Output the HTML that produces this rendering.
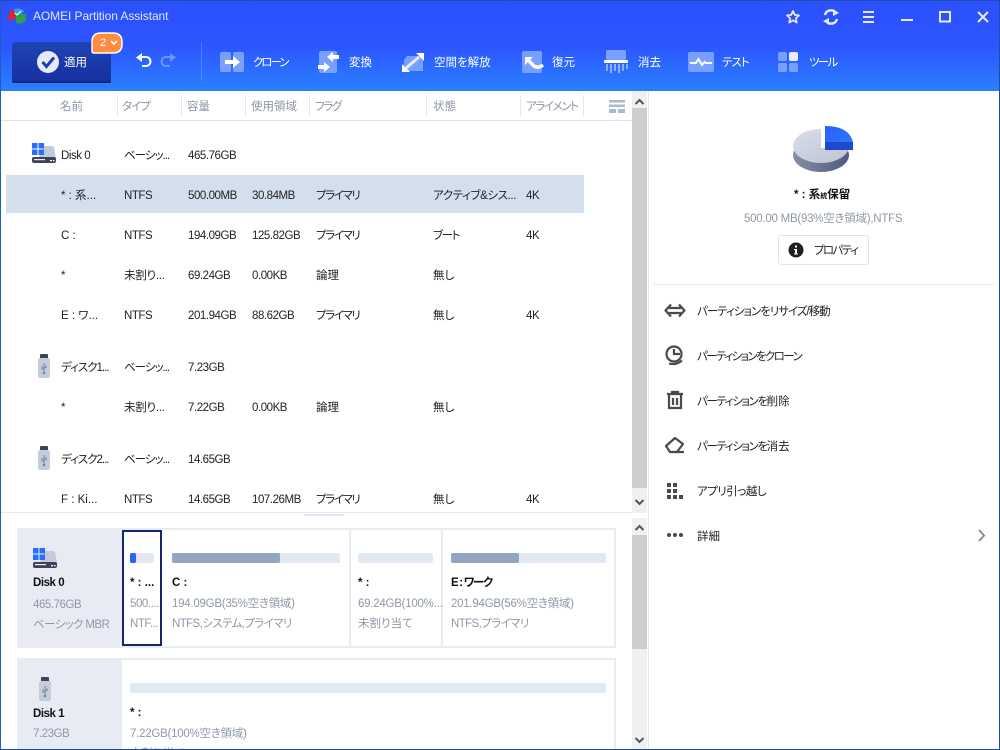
<!DOCTYPE html>
<html lang="ja"><head><meta charset="utf-8"><title>AOMEI Partition Assistant</title>
<style>
html,body{margin:0;padding:0;width:1000px;height:750px;overflow:hidden;background:#fff}
body{position:relative;font-family:"Liberation Sans","Noto Sans CJK JP",sans-serif;font-size:11.5px;color:#222;font-feature-settings:"palt"}
.b{position:absolute}
.t{position:absolute;white-space:nowrap;line-height:16px;height:16px;margin-top:1px}
.h{color:#8b95a7;font-size:11.5px}
.w{color:#fff;font-size:11.5px}
.g{color:#8f98a8;font-size:11.5px}
.s{font-weight:bold;color:#111}
.n{letter-spacing:-.45px}
.m{letter-spacing:-.25px}
.k{letter-spacing:-1.4px}
.j{letter-spacing:-1px}
.i{letter-spacing:-.6px}
svg{position:absolute;left:0;top:0}
</style></head><body>
<div class="b" style="left:0;top:0;width:1000px;height:91px;background:linear-gradient(#2b50ff 0,#2d55ff 50%,#2a80ff 100%)"></div>
<div class="b" style="left:6px;top:175px;width:578px;height:38px;background:#d4dfee"></div>
<div class="b" style="left:0;top:120px;width:632px;height:1px;background:#dbe2ee"></div>
<div class="b" style="left:0;top:512px;width:632px;height:1px;background:#e3e8f2"></div>
<div class="b" style="left:304px;top:514px;width:40px;height:2px;background:#e3e8f2"></div>
<div class="b" style="left:632px;top:91px;width:15px;height:422px;background:#f0f0f0"></div>
<div class="b" style="left:632px;top:108px;width:15px;height:380px;background:#cdcdcd"></div>
<div class="b" style="left:632px;top:518px;width:15px;height:231px;background:#f0f0f0"></div>
<div class="b" style="left:632px;top:535px;width:15px;height:114px;background:#cdcdcd"></div>
<div class="b" style="left:648px;top:91px;width:1px;height:658px;background:#e0e6f0"></div>
<div class="b" style="left:653px;top:284px;width:341px;height:1px;background:#e3e8f2"></div>
<div class="b" style="left:778px;top:235px;width:89px;height:28px;border:1px solid #dfe4ee;border-radius:3px"></div>

<div class="b" style="left:17px;top:528px;width:595px;height:116px;border:2px solid #e8ecf3"></div>
<div class="b" style="left:17px;top:528px;width:105px;height:120px;background:#e8ebf3"></div>
<div class="b" style="left:349px;top:530px;width:2px;height:116px;background:#e8ecf3"></div>
<div class="b" style="left:441px;top:530px;width:2px;height:116px;background:#e8ecf3"></div>
<div class="b" style="left:122px;top:530px;width:36px;height:112px;border:2px solid #14266e"></div>
<div class="b" style="left:17px;top:658px;width:595px;height:100px;border:2px solid #e8ecf3"></div>
<div class="b" style="left:17px;top:658px;width:105px;height:100px;background:#e8ebf3"></div>

<div class="b" style="left:130px;top:553px;width:24px;height:10px;background:#e3e9f3;border-radius:2px"></div>
<div class="b" style="left:130px;top:553px;width:6px;height:10px;background:#2a62f5;border-radius:2px"></div>
<div class="b" style="left:172px;top:553px;width:168px;height:10px;background:#e3e9f3;border-radius:2px"></div>
<div class="b" style="left:172px;top:553px;width:108px;height:10px;background:#92a6c4;border-radius:2px"></div>
<div class="b" style="left:358px;top:553px;width:75px;height:10px;background:#e3e9f3;border-radius:2px"></div>
<div class="b" style="left:451px;top:553px;width:155px;height:10px;background:#e3e9f3;border-radius:2px"></div>
<div class="b" style="left:451px;top:553px;width:68px;height:10px;background:#92a6c4;border-radius:2px"></div>
<div class="b" style="left:130px;top:683px;width:476px;height:10px;background:#e3e9f3;border-radius:2px"></div>

<div class="b" style="left:0;top:0;width:1000px;height:1px;background:#1c4fa0"></div>
<div class="b" style="left:0;top:0;width:1px;height:750px;background:#1a5fc0"></div>
<div class="b" style="left:999px;top:0;width:1px;height:750px;background:#1c4fa0"></div>

<svg width="1000" height="750" viewBox="0 0 1000 750">
<defs>
<linearGradient id="ap" x1="0" y1="0" x2="0" y2="1"><stop offset="0" stop-color="#1d44b4"/><stop offset="1" stop-color="#1730a0"/></linearGradient>
<linearGradient id="pie" x1="0" y1="0" x2="1" y2="1"><stop offset="0" stop-color="#d9dde8"/><stop offset="1" stop-color="#bcc4d6"/></linearGradient>
<linearGradient id="pies" x1="0" y1="0" x2="1" y2="0"><stop offset="0" stop-color="#868ea8"/><stop offset="1" stop-color="#4f5a7c"/></linearGradient>
<linearGradient id="bl" x1="0" y1="0" x2="1" y2="1"><stop offset="0" stop-color="#2a5cff"/><stop offset="1" stop-color="#2a80ff"/></linearGradient>
<g id="usb"><rect x="2" y="0" width="8" height="5" rx="1" fill="#3d4458"/><rect x="0" y="4" width="12" height="20" rx="2" fill="#c5cddd"/><path d="M6 9v10M4 12v3h2M8 11v2.500H6" stroke="#78839b" stroke-width="1" fill="none"/><circle cx="6" cy="19" r="1.300" fill="#78839b"/></g>
<g id="dk"><path d="M12 3 H20 Q22 3 22.500 6 L24 16 H6Z" fill="#c3cadb"/><rect x="0" y="14" width="24" height="6" rx="2" fill="#3d4458"/><rect x="2" y="16" width="11" height="1.200" fill="#e8ebf3"/><rect x="18" y="17" width="2" height="1.300" fill="#fff"/><rect x="21" y="17" width="1.500" height="1.300" fill="#fff"/><path d="M0 0h5.500v5.500H0zM6.500 0H12v5.500H6.500zM0 6.500h5.500V12H0zM6.500 6.500H12V12H6.500z" fill="#2a6cff"/></g>
</defs>
<!-- app icon -->
<path d="M8 19 Q8 10 16 9 L19 9 V15 L13 20 H9Z" fill="#d8282d"/><path d="M14 9 Q20 7 24 11 L21 15 H15Z" fill="#2f9be0"/><path d="M16 14 H26 V21 Q21 25 16 23Z" fill="#2aa14c"/><path d="M15 13l2 2 4-4" stroke="#fff" stroke-width="1" fill="none"/>
<!-- top right -->
<path d="M793 11 l1.800 3.900 4.200.5-3.100 2.900.8 4.200-3.700-2.100-3.700 2.100.8-4.200-3.100-2.900 4.200-.5z" fill="none" stroke="#e6ebff" stroke-width="1.800" stroke-linejoin="round"/>
<path d="M825 15a6 6 0 0 1 10-3M837 19a6 6 0 0 1-10 3" fill="none" stroke="#e6ebff" stroke-width="2.400"/><path d="M833 9l6 4-6 3zM829 25l-6-4 6-3z" fill="#e6ebff"/>
<path d="M863 12h11M863 17h11M863 22h11" stroke="#e6ebff" stroke-width="2"/>
<path d="M901 20h12" stroke="#e6ebff" stroke-width="2"/>
<rect x="940" y="12" width="10" height="9.500" fill="none" stroke="#e6ebff" stroke-width="2"/>
<path d="M978 12l10 10M988 12l-10 10" stroke="#e6ebff" stroke-width="2"/>
<!-- apply -->
<rect x="12" y="42" width="99" height="41" rx="3" fill="url(#ap)"/>
<rect x="12" y="81" width="99" height="2" rx="1" fill="#142680"/>
<circle cx="48" cy="62" r="11" fill="#e6eaf6"/><path d="M42.500 62l4 4.500 7.500-9" fill="none" stroke="#1f3fb0" stroke-width="3"/>
<path d="M94 53 H113 Q122 53 122 44 V42 Q122 33 113 33 H101 Q92 33 92 42 V51 Q92 53 94 53Z" fill="#ff8c3f" stroke="#fff" stroke-width="1.500"/>
<path d="M111 41l3 3 3-3" fill="none" stroke="#fff" stroke-width="1.800"/>
<!-- undo redo -->
<path d="M141 57h5a4.500 4.500 0 0 1 0 9h-4" fill="none" stroke="#fff" stroke-width="2"/><path d="M142 53l-6 4.500 6 4.500z" fill="#fff"/>
<path d="M171 57h-5a4.500 4.500 0 0 0 0 9h4" fill="none" stroke="#6c95ff" stroke-width="2"/><path d="M170 53l6 4.500-6 4.500z" fill="#6c95ff"/>
<rect x="201" y="42" width="1" height="39" fill="#fff" opacity=".18"/>
<!-- clone -->
<rect x="220" y="52" width="11" height="20" rx="2" fill="#7aa0ff"/><rect x="233" y="52" width="11" height="20" rx="2" fill="#7aa0ff"/>
<path d="M225 60h8v-4l7 6-7 6v-4h-8z" fill="#fff"/>
<!-- convert -->
<rect x="319" y="51" width="18" height="22" rx="2" fill="#7aa0ff"/>
<path d="M339 55v4h-6v3l-6-5 6-5v3z" fill="#fff"/><path d="M318 65h6v-3l6 5-6 5v-3h-6z" fill="#fff"/>
<!-- free -->
<path d="M407 56h16v15h-19v-11z" fill="#7aa0ff"/>
<path d="M424 53v8l-8-8z" fill="#fff"/><path d="M402 72v-8l8 8z" fill="#fff"/>
<path d="M412 63l7-6M405 69l7-6" stroke="#e6ecff" stroke-width="3"/>
<!-- restore -->
<rect x="522" y="51" width="20" height="22" rx="2" fill="#7aa0ff"/><path d="M525 57h8l-8 8z" fill="#fff"/><path d="M528 60l6 6q4 3 9-1" fill="none" stroke="#fff" stroke-width="3.500"/>
<!-- wipe -->
<path d="M606 52q0-2 2-2h16q2 0 2 2v8h-20z" fill="#7aa0ff"/><rect x="604" y="60" width="24" height="3" rx="1" fill="#fff"/>
<path d="M607 64v7M611 64v9M615 64v7M619 64v9M623 64v7M627 64v5" stroke="#8cb0ff" stroke-width="2"/>
<!-- test -->
<rect x="688" y="52" width="26" height="20" rx="2" fill="#7aa0ff"/><path d="M690 63h6l2.500-4 3.500 6 2.500-3 1.500 1h6" fill="none" stroke="#fff" stroke-width="2"/>
<!-- tools -->
<rect x="778" y="52" width="9" height="9" rx="2" fill="#7aa0ff"/><rect x="789" y="52" width="9" height="9" rx="2" fill="#e6ecff"/><rect x="778" y="63" width="9" height="9" rx="2" fill="#7aa0ff"/><rect x="789" y="63" width="9" height="9" rx="2" fill="#7aa0ff"/>
<!-- header list icon -->
<path d="M609 100h16v2.500h-16zM609 104.500h16v2.500h-16z" fill="#a9b9d0"/><path d="M609 109h7v4h-7zM618 109h7v4h-7z" fill="#a9b9d0"/>
<!-- scrollbar arrows -->
<g fill="none" stroke="#555" stroke-width="2"><path d="M635.500 104l4-4 4 4M635.500 500l4 4 4-4M635.500 530l4-4 4 4M635.500 738l4 4 4-4"/></g>
<!-- disk icons -->
<use href="#dk" x="32" y="143"/>
<use href="#dk" x="33" y="548"/>
<use href="#usb" x="38" y="354"/><use href="#usb" x="38" y="446"/><use href="#usb" x="39" y="677"/>
<!-- pie -->
<ellipse cx="821" cy="155" rx="28" ry="17" fill="url(#pies)"/>
<ellipse cx="821" cy="146" rx="28" ry="17" fill="url(#pie)"/>
<rect x="821" y="125" width="5" height="23" fill="#fff"/>
<path d="M825 126q24 0 28 16v8h-28z" fill="url(#bl)"/><path d="M825 142h28v8h-28z" fill="#1d49cc"/>
<!-- info -->
<circle cx="796" cy="250" r="7.500" fill="#1f1f1f"/><path d="M794 249h3v4.500h1v1h-4v-1h1v-3.500h-1zM795 245.500h2v2h-2z" fill="#fff"/>
<!-- menu icons -->
<g fill="none" stroke="#4a4a4a" stroke-width="2.200">
<path d="M669 308h12M669 313h12"/><path d="M671 304.500l-5.500 6 5.500 6M679 304.500l5.500 6-5.500 6" stroke-linejoin="round"/>
<circle cx="674" cy="354" r="7.500"/><path d="M674 349v5h6"/><path d="M669 363.500q7 2 13-3"/>
<path d="M667 394h16M672 394v-2h6v2M669 395v13h12v-13M673 398v7M677 398v7"/>
<path d="M666 446l9-8 8 6-6 8h-7z" stroke-linejoin="round"/><path d="M674 452h10"/>
</g>
<g fill="#4a4a4a"><rect x="667" y="483" width="4" height="4"/><rect x="673" y="483" width="4" height="4"/><rect x="667" y="489" width="4" height="4"/><rect x="673" y="489" width="4" height="4"/><rect x="667" y="495" width="4" height="4"/><rect x="673" y="495" width="4" height="4"/><rect x="679" y="495" width="4" height="4"/>
<circle cx="669" cy="535" r="2"/><circle cx="675" cy="535" r="2"/><circle cx="681" cy="535" r="2"/></g>
<path d="M979 530l5 5.500-5 5.500" fill="none" stroke="#8a8f99" stroke-width="2"/>
<!-- header separators -->
<g fill="#e3e8f2"><rect x="117" y="95" width="1" height="22"/><rect x="181" y="95" width="1" height="22"/><rect x="245" y="95" width="1" height="22"/><rect x="309" y="95" width="1" height="22"/><rect x="426" y="95" width="1" height="22"/><rect x="520" y="95" width="1" height="22"/><rect x="583" y="95" width="1" height="22"/></g>
</svg>

<span class="t" style="left:33px;top:7px;color:#dfe6ff;font-size:12px;letter-spacing:-.08px">AOMEI Partition Assistant</span>
<span class="t w" style="left:64px;top:54px">適用</span>
<span class="t w" style="left:100px;top:34px;font-size:11px">2</span>
<span class="t w" style="left:253px;top:54px;letter-spacing:-2px">クローン</span>
<span class="t w" style="left:349px;top:54px">変換</span>
<span class="t w" style="left:434px;top:54px">空間を解放</span>
<span class="t w" style="left:552px;top:54px">復元</span>
<span class="t w" style="left:638px;top:54px">消去</span>
<span class="t w j" style="left:722px;top:54px">テスト</span>
<span class="t w" style="left:809px;top:54px;letter-spacing:-1.700px">ツール</span>

<span class="t h" style="left:60px;top:98px">名前</span>
<span class="t h j" style="left:122px;top:98px">タイプ</span>
<span class="t h" style="left:187px;top:98px">容量</span>
<span class="t h" style="left:251px;top:98px">使用領域</span>
<span class="t h k" style="left:315px;top:98px">フラグ</span>
<span class="t h" style="left:433px;top:98px">状態</span>
<span class="t h k" style="left:526px;top:98px">アライメント</span>

<span class="t n" style="left:61px;top:147px">Disk 0</span><span class="t j" style="left:124px;top:147px">ベーシッ...</span><span class="t n" style="left:188px;top:147px">465.76GB</span>

<span class="t" style="left:61px;top:187px">* : 系...</span><span class="t n" style="left:124px;top:187px">NTFS</span><span class="t n" style="left:188px;top:187px">500.00MB</span><span class="t n" style="left:252px;top:187px">30.84MB</span><span class="t k" style="left:316px;top:187px">プライマリ</span><span class="t" style="left:433px;top:187px;letter-spacing:-.4px">アクティブ&amp;シス...</span><span class="t n" style="left:526px;top:187px">4K</span>

<span class="t" style="left:61px;top:227px">C :</span><span class="t n" style="left:124px;top:227px">NTFS</span><span class="t n" style="left:188px;top:227px">194.09GB</span><span class="t n" style="left:252px;top:227px">125.82GB</span><span class="t k" style="left:316px;top:227px">プライマリ</span><span class="t k" style="left:433px;top:227px">ブート</span><span class="t n" style="left:526px;top:227px">4K</span>

<span class="t" style="left:61px;top:267px">*</span><span class="t m" style="left:124px;top:267px">未割り...</span><span class="t n" style="left:188px;top:267px">69.24GB</span><span class="t n" style="left:252px;top:267px">0.00KB</span><span class="t" style="left:316px;top:267px">論理</span><span class="t" style="left:433px;top:267px">無し</span>

<span class="t" style="left:61px;top:307px">E : ワ...</span><span class="t n" style="left:124px;top:307px">NTFS</span><span class="t n" style="left:188px;top:307px">201.94GB</span><span class="t n" style="left:252px;top:307px">88.62GB</span><span class="t k" style="left:316px;top:307px">プライマリ</span><span class="t" style="left:433px;top:307px">無し</span><span class="t n" style="left:526px;top:307px">4K</span>

<span class="t j" style="left:61px;top:359px">ディスク1...</span><span class="t j" style="left:124px;top:359px">ベーシッ...</span><span class="t n" style="left:188px;top:359px">7.23GB</span>

<span class="t" style="left:61px;top:399px">*</span><span class="t m" style="left:124px;top:399px">未割り...</span><span class="t n" style="left:188px;top:399px">7.22GB</span><span class="t n" style="left:252px;top:399px">0.00KB</span><span class="t" style="left:316px;top:399px">論理</span><span class="t" style="left:433px;top:399px">無し</span>

<span class="t j" style="left:61px;top:451px">ディスク2...</span><span class="t j" style="left:124px;top:451px">ベーシッ...</span><span class="t n" style="left:188px;top:451px">14.65GB</span>

<span class="t" style="left:61px;top:491px">F : Ki...</span><span class="t n" style="left:124px;top:491px">NTFS</span><span class="t n" style="left:188px;top:491px">14.65GB</span><span class="t n" style="left:252px;top:491px">107.26MB</span><span class="t k" style="left:316px;top:491px">プライマリ</span><span class="t" style="left:433px;top:491px">無し</span><span class="t n" style="left:526px;top:491px">4K</span>

<span class="t s" style="left:794px;top:186px">* : 系<span style="font-size:7px">統</span>保留</span>
<span class="t g m" style="left:744px;top:210px">500.00 MB(93%空き領域),NTFS</span>
<span class="t" style="left:814px;top:242px;letter-spacing:-1.600px">プロパティ</span>
<span class="t" style="left:697px;top:303px;letter-spacing:-1px">パーティションをリサイズ/移動</span>
<span class="t" style="left:697px;top:348px;letter-spacing:-1.600px">パーティションをクローン</span>
<span class="t" style="left:697px;top:393px"><span class="k">パーティションを</span>削除</span>
<span class="t" style="left:697px;top:438px"><span class="k">パーティションを</span>消去</span>
<span class="t" style="left:697px;top:483px;letter-spacing:-.5px">アプリ引っ越し</span>
<span class="t" style="left:697px;top:528px">詳細</span>

<span class="t s n" style="left:33px;top:574px">Disk 0</span>
<span class="t g n" style="left:33px;top:596px">465.76GB</span>
<span class="t g i" style="left:33px;top:616px">ベーシック MBR</span>
<span class="t s" style="left:130px;top:574px">* : ...</span>
<span class="t g n" style="left:130px;top:595px">500....</span>
<span class="t g n" style="left:130px;top:615px">NTF...</span>
<span class="t s" style="left:172px;top:574px">C :</span>
<span class="t g m" style="left:172px;top:595px">194.09GB(35%空き領域)</span>
<span class="t g i" style="left:172px;top:615px">NTFS,システム,プライマリ</span>
<span class="t s" style="left:358px;top:574px">* :</span>
<span class="t g m" style="left:358px;top:595px">69.24GB(100%...</span>
<span class="t g" style="left:358px;top:615px">未割り当て</span>
<span class="t s" style="left:451px;top:574px;letter-spacing:-1.300px">E : ワーク</span>
<span class="t g m" style="left:451px;top:595px">201.94GB(56%空き領域)</span>
<span class="t g i" style="left:451px;top:615px">NTFS,プライマリ</span>
<span class="t s n" style="left:33px;top:705px">Disk 1</span>
<span class="t g n" style="left:33px;top:725px">7.23GB</span>
<span class="t s" style="left:130px;top:704px">* :</span>
<span class="t g m" style="left:130px;top:725px">7.22GB(100%空き領域)</span>
<span class="t g" style="left:130px;top:745px">未割り当て</span>
<div class="b" style="left:0;top:749px;width:1000px;height:1px;background:#1c4fa0"></div>
</body></html>
